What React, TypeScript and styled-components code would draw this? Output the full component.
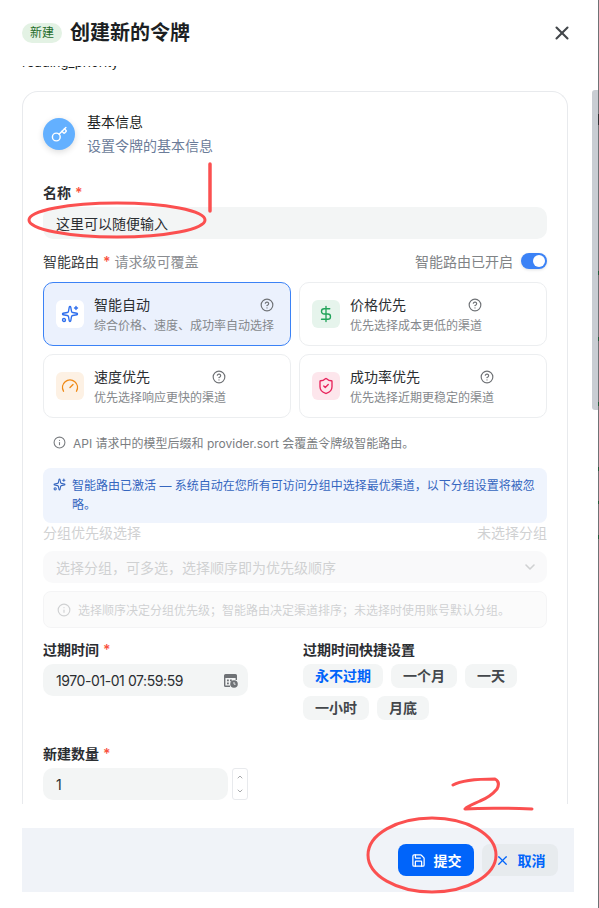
import React from 'react';
import styled, { createGlobalStyle } from 'styled-components';
import { X, Key, Sparkles, DollarSign, Gauge, ShieldCheck, CircleHelp, Info, ChevronDown, ChevronUp, Save } from 'lucide-react';

const Global = createGlobalStyle`
  html, body { margin: 0; height: 100%; background: #fff; }
  body { font-family: Inter, "Noto Sans CJK SC", sans-serif; color: #1c1f23; font-size: 14px; }
  * { box-sizing: border-box; }
`;

const Page = styled.div`
  position: relative;
  width: 599px;
  height: 908px;
  overflow: hidden;
  background: #fff;
`;
const Modal = styled.div`
  display: flex;
  flex-direction: column;
  width: 598px;
  height: 908px;
  padding: 0 24px 16px 22px;
`;
const Header = styled.header`
  display: flex;
  align-items: center;
  height: 66px;
  flex: none;
  gap: 8px;
`;
const NewBadge = styled.span`
  width: 40px;
  height: 20px;
  border-radius: 10px;
  background: #e3f2e4;
  color: #1f6b2a;
  font-size: 12px;
  line-height: 20px;
  text-align: center;
`;
const Title = styled.h1`
  margin: 0;
  font-size: 20px;
  font-weight: 700;
  line-height: 28px;
  flex: 1;
`;
const CloseBtn = styled.span`
  display: flex;
  color: #43474b;
  margin-right: 1px;
  margin-top: -1px;
`;
const Scroller = styled.div`
  flex: none;
  height: 738px;
  margin-right: 6px;
  overflow: hidden;
`;
const ClippedLine = styled.div`
  height: 38px;
  margin-top: -13px;
  font-size: 13px;
  line-height: 18px;
  color: #1c1f23;
`;
const Card = styled.section`
  width: 546px;
  border: 1px solid #e8eaed;
  border-bottom: none;
  border-radius: 16px 16px 0 0;
  padding: 20px;
  height: 760px;
`;
const CardHead = styled.div`
  display: flex;
  align-items: center;
  gap: 12px;
  height: 44px;
`;
const KeyIcon = styled.div`
  width: 32px;
  height: 32px;
  border-radius: 50%;
  background: #63b0ff;
  color: #fff;
  display: flex;
  align-items: center;
  justify-content: center;
  box-shadow: 0 2px 6px rgba(0, 0, 0, 0.14);
`;
const HeadText = styled.div`
  display: flex;
  flex-direction: column;
  gap: 4px;
  line-height: 20px;
`;
const HeadTitle = styled.div`
  color: #1c1f23;
`;
const HeadDesc = styled.div`
  color: #6b7c99;
`;
const FieldLabel = styled.div<{ $top: number }>`
  margin-top: ${p => p.$top}px;
  height: 20px;
  line-height: 20px;
  font-weight: 600;
  color: #2b2e32;
`;
const Star = styled.span`
  color: #f9533f;
  margin-left: 4px;
  font-weight: 600;
`;
const TextInput = styled.div<{ $w?: number }>`
  margin-top: 4px;
  height: 32px;
  width: ${p => (p.$w ? `${p.$w}px` : '100%')};
  border-radius: 10px;
  background: #f3f5f5;
  padding: 0 13px;
  display: flex;
  align-items: center;
  justify-content: space-between;
  color: #2b2e32;
`;
const DateText = styled.span`
  letter-spacing: -0.42px;
`;
const CalendarSvg = styled.svg`
  margin-right: -3px;
`;
const RoutingRow = styled.div`
  display: flex;
  justify-content: space-between;
  align-items: center;
  height: 20px;
  margin-top: 12px;
`;
const RoutingLabel = styled.div`
  color: #3a3d41;
`;
const Muted = styled.span`
  color: #8a8d91;
  margin-left: 4px;
`;
const RoutingRight = styled.div`
  display: flex;
  align-items: center;
  gap: 8px;
  color: #808386;
`;
const Switch = styled.div`
  width: 26px;
  height: 16px;
  border-radius: 8px;
  background: #3b82f6;
  display: flex;
  justify-content: flex-end;
  align-items: center;
  padding-right: 2px;
  box-shadow: 0 1px 3px rgba(0, 0, 0, 0.12);
`;
const Knob = styled.div`
  width: 12px;
  height: 12px;
  border-radius: 50%;
  background: #fff;
`;
const OptGrid = styled.div`
  display: grid;
  grid-template-columns: 248px 248px;
  gap: 8px;
  margin-top: 11px;
`;
const Opt = styled.div<{ $active?: boolean }>`
  height: 64px;
  border-radius: 10px;
  border: 1px solid ${p => (p.$active ? '#3b82f6' : '#eceef0')};
  background: ${p => (p.$active ? '#ebf1fd' : '#fff')};
  padding: 0 12px;
  display: flex;
  align-items: center;
  gap: 10px;
`;
const OptIcon = styled.div<{ $bg: string; $fg: string }>`
  width: 28px;
  height: 28px;
  flex: none;
  border-radius: 6px;
  background: ${p => p.$bg};
  color: ${p => p.$fg};
  display: flex;
  align-items: center;
  justify-content: center;
`;
const OptBody = styled.div`
  display: flex;
  flex-direction: column;
  gap: 2px;
  padding-top: 2px;
`;
const OptTitleRow = styled.div`
  display: flex;
  justify-content: space-between;
  align-items: center;
  height: 20px;
  line-height: 20px;
  color: #2b2e32;
`;
const OptHelp = styled.span`
  display: flex;
  color: #6f7276;
`;
const OptDesc = styled.div`
  font-size: 12px;
  line-height: 18px;
  color: #85888c;
  white-space: nowrap;
`;
const RoutingNote = styled.div`
  display: flex;
  align-items: center;
  gap: 7px;
  margin: 15px 0 0 10px;
  height: 18px;
  font-size: 12px;
  color: #7a7d81;
`;
const Callout = styled.div`
  margin-top: 17px;
  height: 55px;
  border-radius: 8px;
  background: #eff4fd;
  display: flex;
  gap: 6px;
  padding: 8px 10px;
  font-size: 12px;
  line-height: 19px;
  color: #3566bf;
`;
const CalloutIcon = styled.span`
  flex: none;
  display: flex;
  margin-top: 2px;
`;
const Disabled = styled.div`
  opacity: 0.38;
`;
const GroupHead = styled.div`
  display: flex;
  justify-content: space-between;
  height: 20px;
  line-height: 20px;
  color: #85888c;
`;
const SelectBox = styled.div`
  margin-top: 8px;
  height: 32px;
  border-radius: 10px;
  background: #f0f1f2;
  padding: 0 9px 0 13px;
  display: flex;
  align-items: center;
  justify-content: space-between;
  color: #85888c;
`;
const HintBox = styled.div`
  margin-top: 8px;
  height: 37px;
  border-radius: 8px;
  border: 1px solid #e3e4e6;
  background: #f6f7f7;
  padding: 0 13px;
  display: flex;
  align-items: center;
  gap: 7px;
  font-size: 12px;
  color: #85888c;
`;
const ExpiryGrid = styled.div`
  display: grid;
  grid-template-columns: 244px 244px;
  gap: 16px;
  margin-top: 12px;
  height: 104px;
`;
const Chips = styled.div`
  display: flex;
  flex-wrap: wrap;
  gap: 8px;
  margin-top: 4px;
`;
const Chip = styled.div<{ $on?: boolean }>`
  height: 24px;
  line-height: 24px;
  padding: 0 12px;
  border-radius: 8px;
  background: #f3f5f5;
  font-weight: 600;
  font-size: 14px;
  color: ${p => (p.$on ? '#0064fa' : '#43474b')};
`;
const CountRow = styled.div`
  display: flex;
  gap: 4px;
  margin-top: 4px;
`;
const CountInput = styled(TextInput)`
  margin-top: 0;
`;
const Stepper = styled.div`
  width: 16px;
  height: 32px;
  border: 1px solid #e8eaed;
  border-radius: 3px;
  display: flex;
  flex-direction: column;
  align-items: center;
  justify-content: center;
  gap: 6px;
  color: #7a7d81;
`;
const Footer = styled.footer`
  flex: none;
  margin-top: 24px;
  width: 552px;
  height: 64px;
  background: #f0f3f8;
  display: flex;
  justify-content: flex-end;
  align-items: center;
  gap: 8px;
  padding-right: 16px;
`;
const Btn = styled.div<{ $primary?: boolean }>`
  width: 76px;
  height: 32px;
  border-radius: 8px;
  background: ${p => (p.$primary ? '#0064fa' : '#e7ebee')};
  color: ${p => (p.$primary ? '#fff' : '#0064fa')};
  font-weight: 600;
  display: flex;
  align-items: center;
  justify-content: center;
  gap: 8px;
`;
const Scrollbar = styled.div`
  position: absolute;
  right: 1px;
  top: 90px;
  width: 6px;
  height: 320px;
  background: #c9cdd3;
  border-radius: 3px 0 0 3px;
`;
const BackdropEdge = styled.div`
  position: absolute;
  right: 0;
  top: 0;
  width: 1px;
  height: 908px;
  background: linear-gradient(
    to bottom,
    #6f7275 0 114px, #2e3033 114px 125px, #6f7275 125px 271px,
    #1f5a3a 271px 275px, #6f7275 275px 337px,
    #1f5a3a 337px 341px, #6f7275 341px 402px,
    #1f5a3a 402px 406px, #6f7275 406px 467px,
    #1f5a3a 467px 471px, #6f7275 471px 501px,
    #1f5a3a 501px 504px, #6f7275 504px 535px,
    #1f5a3a 535px 539px, #6f7275 539px 908px
  );
`;
const Annotation = styled.svg`
  position: absolute;
  inset: 0;
  width: 599px;
  height: 908px;
  pointer-events: none;
`;

const options = [
  { t: '智能自动', d: '综合价格、速度、成功率自动选择', bg: '#ffffff', fg: '#2f6fed', Icon: Sparkles, active: true },
  { t: '价格优先', d: '优先选择成本更低的渠道', bg: '#e6f4ec', fg: '#22a35a', Icon: DollarSign },
  { t: '速度优先', d: '优先选择响应更快的渠道', bg: '#fdf1e4', fg: '#ef8a17', Icon: Gauge },
  { t: '成功率优先', d: '优先选择近期更稳定的渠道', bg: '#fde6ec', fg: '#e8245c', Icon: ShieldCheck },
];

function CalendarGlyph() {
  return (
    <CalendarSvg width="15" height="15" viewBox="0 0 15 15" aria-hidden="true">
      <path d="M2.5 1h10A1.5 1.5 0 0 1 14 2.5V7h-1.4V5H2.4v7.6H7V14H2.500A1.500 1.500 0 0 1 1 12.500v-10A1.500 1.500 0 0 1 2.500 1z" fill="#6f7276" />
      <rect x="4" y="6.500" width="1.800" height="1.800" fill="#6f7276" />
      <rect x="7" y="6.500" width="1.800" height="1.800" fill="#6f7276" />
      <rect x="4" y="9.500" width="1.800" height="1.800" fill="#6f7276" />
      <circle cx="11" cy="11" r="3.800" fill="#6f7276" />
      <path d="M11 9v2.200h1.600" stroke="#f3f5f5" strokeWidth="0.900" fill="none" />
    </CalendarSvg>
  );
}

export default function App() {
  return (
    <Page>
      <Global />
      <Modal>
        <Header>
          <NewBadge>新建</NewBadge>
          <Title>创建新的令牌</Title>
          <CloseBtn><X size={22} strokeWidth={2.3} /></CloseBtn>
        </Header>
        <Scroller>
          <ClippedLine>reading_priority</ClippedLine>
          <Card>
            <CardHead>
              <KeyIcon><Key size={17} strokeWidth={2} /></KeyIcon>
              <HeadText>
                <HeadTitle>基本信息</HeadTitle>
                <HeadDesc>设置令牌的基本信息</HeadDesc>
              </HeadText>
            </CardHead>
            <FieldLabel $top={27}>名称<Star>*</Star></FieldLabel>
            <TextInput>这里可以随便输入</TextInput>
            <RoutingRow>
              <RoutingLabel>智能路由<Star>*</Star><Muted>请求级可覆盖</Muted></RoutingLabel>
              <RoutingRight>智能路由已开启<Switch><Knob /></Switch></RoutingRight>
            </RoutingRow>
            <OptGrid>
              {options.map(({ t, d, bg, fg, Icon, active }) => (
                <Opt key={t} $active={active}>
                  <OptIcon $bg={bg} $fg={fg}><Icon size={18} strokeWidth={1.8} /></OptIcon>
                  <OptBody>
                    <OptTitleRow>{t}<OptHelp><CircleHelp size={14} /></OptHelp></OptTitleRow>
                    <OptDesc>{d}</OptDesc>
                  </OptBody>
                </Opt>
              ))}
            </OptGrid>
            <RoutingNote><Info size={13} />API 请求中的模型后缀和 provider.sort 会覆盖令牌级智能路由。</RoutingNote>
            <Callout>
              <CalloutIcon><Sparkles size={13} /></CalloutIcon>
              <div>智能路由已激活 — 系统自动在您所有可访问分组中选择最优渠道，以下分组设置将被忽略。</div>
            </Callout>
            <Disabled>
              <GroupHead><span>分组优先级选择</span><span>未选择分组</span></GroupHead>
              <SelectBox>选择分组，可多选，选择顺序即为优先级顺序<ChevronDown size={16} strokeWidth={2.4} /></SelectBox>
              <HintBox><Info size={14} />选择顺序决定分组优先级；智能路由决定渠道排序；未选择时使用账号默认分组。</HintBox>
            </Disabled>
            <ExpiryGrid>
              <div>
                <FieldLabel $top={0}>过期时间<Star>*</Star></FieldLabel>
                <TextInput $w={205}><DateText>1970-01-01 07:59:59</DateText><CalendarGlyph /></TextInput>
              </div>
              <div>
                <FieldLabel $top={0}>过期时间快捷设置</FieldLabel>
                <Chips>
                  <Chip $on>永不过期</Chip>
                  <Chip>一个月</Chip>
                  <Chip>一天</Chip>
                  <Chip>一小时</Chip>
                  <Chip>月底</Chip>
                </Chips>
              </div>
            </ExpiryGrid>
            <FieldLabel $top={0}>新建数量<Star>*</Star></FieldLabel>
            <CountRow>
              <CountInput $w={185}>1</CountInput>
              <Stepper><ChevronUp size={8} strokeWidth={2} /><ChevronDown size={8} strokeWidth={2} /></Stepper>
            </CountRow>
          </Card>
        </Scroller>
        <Footer>
          <Btn $primary><Save size={15} />提交</Btn>
          <Btn><X size={15} />取消</Btn>
        </Footer>
      </Modal>
      <Scrollbar />
      <BackdropEdge />
      <Annotation viewBox="0 0 599 908" fill="none" stroke="#fb5050" strokeLinecap="round" strokeLinejoin="round">
        <ellipse cx="117" cy="220" rx="88" ry="17" strokeWidth="3" />
        <path d="M210 164 V211" strokeWidth="3.5" />
        <ellipse cx="432" cy="855" rx="64" ry="37" strokeWidth="3" />
        <path d="M453 785 C460 781 472 779 495 779 C499 781 499 785 497 789 C492 795 485 799 480 801 C474 804 468 806 465 809 C480 808 505 808 532 809" strokeWidth="3" />
      </Annotation>
    </Page>
  );
}
